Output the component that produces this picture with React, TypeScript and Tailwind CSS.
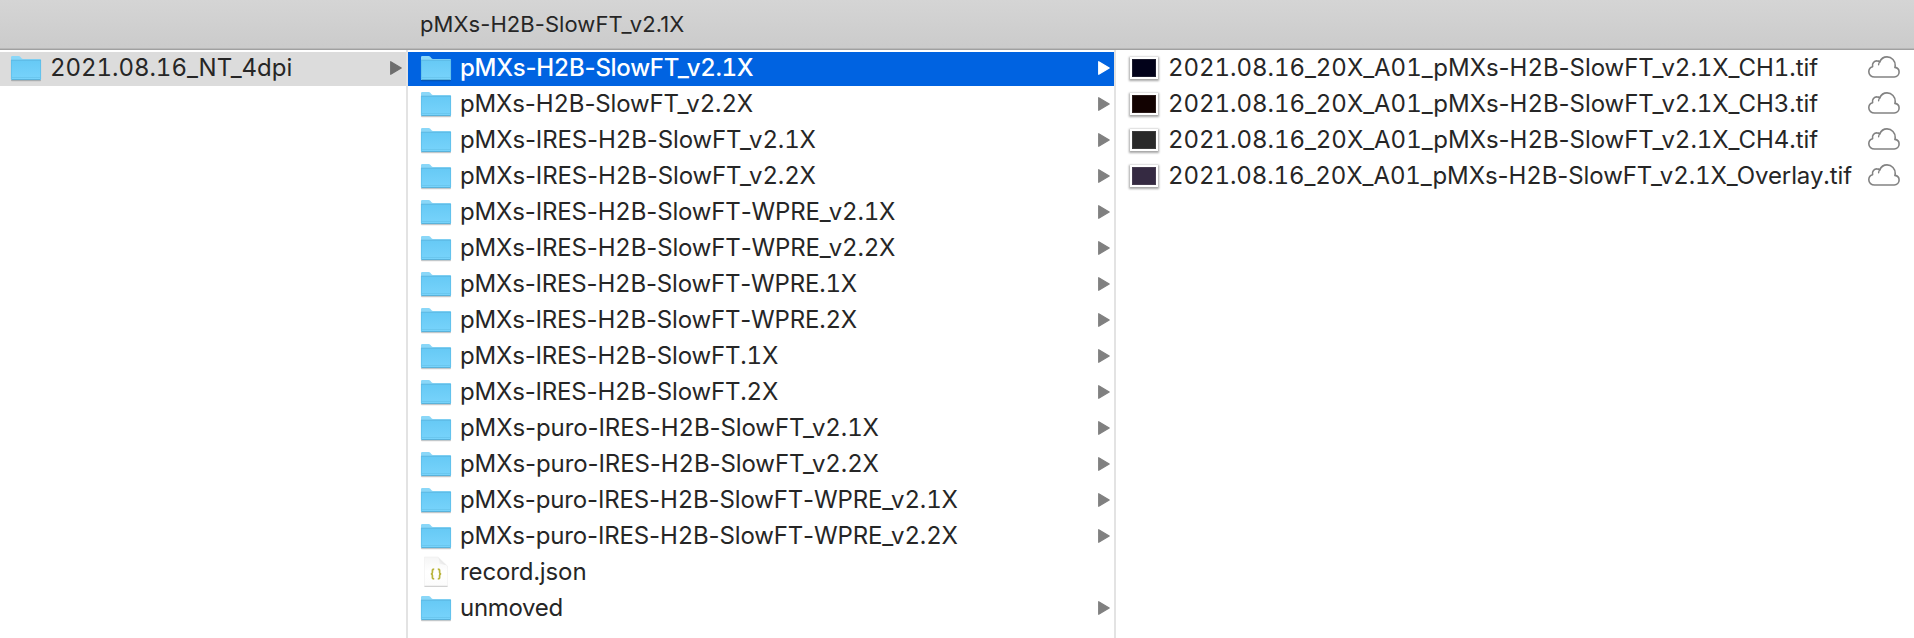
import React from "react";

type Kind = "folder" | "json";
type Entry = { name: string; kind: Kind; tracking: string };

const folders: Entry[] = [
  { name: "pMXs-H2B-SlowFT_v2.1X", kind: "folder", tracking: "tracking-[-0.28px]" },
  { name: "pMXs-H2B-SlowFT_v2.2X", kind: "folder", tracking: "tracking-[-0.15px]" },
  { name: "pMXs-IRES-H2B-SlowFT_v2.1X", kind: "folder", tracking: "tracking-[-0.12px]" },
  { name: "pMXs-IRES-H2B-SlowFT_v2.2X", kind: "folder", tracking: "tracking-[-0.12px]" },
  { name: "pMXs-IRES-H2B-SlowFT-WPRE_v2.1X", kind: "folder", tracking: "tracking-[-0.16px]" },
  { name: "pMXs-IRES-H2B-SlowFT-WPRE_v2.2X", kind: "folder", tracking: "tracking-[-0.16px]" },
  { name: "pMXs-IRES-H2B-SlowFT-WPRE.1X", kind: "folder", tracking: "tracking-[-0.18px]" },
  { name: "pMXs-IRES-H2B-SlowFT-WPRE.2X", kind: "folder", tracking: "tracking-[-0.18px]" },
  { name: "pMXs-IRES-H2B-SlowFT.1X", kind: "folder", tracking: "tracking-[-0.18px]" },
  { name: "pMXs-IRES-H2B-SlowFT.2X", kind: "folder", tracking: "tracking-[-0.18px]" },
  { name: "pMXs-puro-IRES-H2B-SlowFT_v2.1X", kind: "folder", tracking: "tracking-[-0.1px]" },
  { name: "pMXs-puro-IRES-H2B-SlowFT_v2.2X", kind: "folder", tracking: "tracking-[-0.1px]" },
  { name: "pMXs-puro-IRES-H2B-SlowFT-WPRE_v2.1X", kind: "folder", tracking: "tracking-[-0.15px]" },
  { name: "pMXs-puro-IRES-H2B-SlowFT-WPRE_v2.2X", kind: "folder", tracking: "tracking-[-0.15px]" },
  { name: "record.json", kind: "json", tracking: "tracking-[-0.1px]" },
  { name: "unmoved", kind: "folder", tracking: "tracking-[-0.3px]" },
];

const images = [
  { name: "2021.08.16_20X_A01_pMXs-H2B-SlowFT_v2.1X_CH1.tif", color: "bg-[#02021a]", edge: "border-[#1c1c2e]", tracking: "tracking-[-0.045px]" },
  { name: "2021.08.16_20X_A01_pMXs-H2B-SlowFT_v2.1X_CH3.tif", color: "bg-[#120201]", edge: "border-[#2b1c1b]", tracking: "tracking-[-0.045px]" },
  { name: "2021.08.16_20X_A01_pMXs-H2B-SlowFT_v2.1X_CH4.tif", color: "bg-[#292929]", edge: "border-[#3c3c3c]", tracking: "tracking-[-0.045px]" },
  { name: "2021.08.16_20X_A01_pMXs-H2B-SlowFT_v2.1X_Overlay.tif", color: "bg-[#352a42]", edge: "border-[#463c50]", tracking: "tracking-[-0.09px]" },
];

/* Digits are tabular, hyphens keep their proportional width. */
function FileName({ name, className }: { name: string; className: string }) {
  return (
    <span className={className}>
      {name.split(/(-)/).map((part, i) => (
        <span key={i} className={part === "-" ? "normal-nums" : "tabular-nums"}>{part}</span>
      ))}
    </span>
  );
}

function FolderIcon() {
  return (
    <svg width="32" height="28" viewBox="0 0 32 28" className="block shrink-0">
      <defs>
        <linearGradient id="folderFace" x1="0" y1="0" x2="0" y2="1">
          <stop offset="0" stopColor="#66c9f5" />
          <stop offset="1" stopColor="#78d3fb" />
        </linearGradient>
      </defs>
      <rect x="1" y="24.6" width="30" height="1.6" rx="0.8" fill="#000" opacity="0.2" />
      <path d="M1 2.2Q1 1 2.2 1H8.6Q9.6 1 10.3 1.8L11.5 3.2Q12.1 3.9 13 3.9H30Q31 3.9 31 5V24Q31 25 30 25H2Q1 25 1 24Z" fill="#8ad7f8" />
      <path d="M1 5H31V24Q31 25 30 25H2Q1 25 1 24Z" fill="url(#folderFace)" />
      <path d="M1 5.2H31" stroke="#59b4dd" strokeWidth="0.8" />
      <path d="M1.4 5V24M30.6 5V24" stroke="#5bbbe6" strokeWidth="0.7" />
      <path d="M2 22.5H30" stroke="#63bfe8" strokeWidth="0.6" />
      <path d="M1.5 24.6H30.5" stroke="#4ea5cd" strokeWidth="0.8" />
    </svg>
  );
}

function JsonIcon() {
  return (
    <svg width="32" height="34" viewBox="0 0 32 34" className="block shrink-0">
      <defs>
        <linearGradient id="pageFace" x1="0" y1="0" x2="0" y2="1">
          <stop offset="0" stopColor="#f5f5f5" />
          <stop offset="0.5" stopColor="#ffffff" />
          <stop offset="1" stopColor="#fcfcfc" />
        </linearGradient>
        <linearGradient id="pageFold" x1="0" y1="1" x2="1" y2="0">
          <stop offset="0" stopColor="#ffffff" />
          <stop offset="1" stopColor="#cfcfcf" />
        </linearGradient>
      </defs>
      <path d="M4.5 1H18L27.5 10V30.5H4.5Z" fill="url(#pageFace)" stroke="#efefef" strokeWidth="0.6" />
      <path d="M17.5 1Q19.6 2.4 19.4 7.9Q25 8 27.5 10.2Z" fill="url(#pageFold)" />
      <path d="M4.5 30.3H27.5" stroke="#c8c8c8" strokeWidth="1" />
      <g fill="none" stroke="#b9b43c" strokeWidth="1.7">
        <path d="M14.2 13.2Q12.4 13.2 12.4 14.6V16.4Q12.4 17.9 10.8 17.9Q12.4 17.9 12.4 19.4V21.4Q12.4 22.8 14.2 22.8" />
        <path d="M17.8 13.2Q19.6 13.2 19.6 14.6V16.4Q19.6 17.9 21.2 17.9Q19.6 17.9 19.6 19.4V21.4Q19.6 22.8 17.8 22.8" />
      </g>
    </svg>
  );
}

function Arrow({ className }: { className: string }) {
  return (
    <svg width="12" height="14" viewBox="0 0 12 14" className={"mb-[2px] block shrink-0 " + className}>
      <path d="M0.7 0.7L11.2 7L0.7 13.3Z" fill="currentColor" stroke="currentColor" strokeWidth="1.2" strokeLinejoin="round" />
    </svg>
  );
}

function CloudIcon() {
  return (
    <svg width="32" height="22" viewBox="0 0 32 22" className="mb-1 block shrink-0">
      <path
        d="M6.6 21C3.4 21 0.8 18.8 0.8 15.8C0.8 13.2 2.4 11.3 4.6 10.7C3.8 7.5 6.2 4.8 9 4.9C10.2 4.9 11.1 5.3 11.8 5.9C13 3 15.8 0.9 19 0.9C23.8 0.9 27.4 4.8 27.2 9.5C27.2 10.3 27.1 10.8 26.9 11.4C29.3 11.7 31.1 13.6 31.1 16.1C31.1 18.8 29 21 26.3 21Z"
        fill="none" stroke="#828282" strokeWidth="1.6" strokeLinejoin="round"
      />
      <path d="M11.8 5.9Q10.7 7.1 10.6 8.7" fill="none" stroke="#828282" strokeWidth="1.4" strokeLinecap="round" />
    </svg>
  );
}

export default function App() {
  return (
    <div className="flex h-[638px] w-[1914px] flex-col overflow-hidden bg-white font-['Inter','Liberation_Sans',sans-serif] text-[24px] leading-[34px] whitespace-nowrap text-[#262626]">
      <header className="flex h-[50px] shrink-0 items-center border-b border-[#a0a0a0] bg-linear-to-b from-[#d5d5d5] to-[#cbcbcb] pb-px pl-[420px] text-[22px] shadow-[inset_0_-1px_0_#b8b8b8]">
        <h1 className="tracking-[0.06px]">pMXs-H2B-SlowFT_v2.1X</h1>
      </header>
      <main className="flex min-h-0 flex-1">
        <section className="w-[408px] shrink-0 border-r-2 border-[#e3e3e3] pt-[2px]">
          <div className="flex h-[34px] items-center bg-[#dcdcdc] pr-1 pl-[10px]">
            <FolderIcon />
            <FileName name="2021.08.16_NT_4dpi" className="mb-[2px] ml-2 flex-1 tracking-[-0.05px]" />
            <Arrow className="text-[#6e6e6e]" />
          </div>
        </section>
        <section className="flex w-[708px] shrink-0 flex-col gap-[2px] border-r-2 border-[#e3e3e3] pt-[2px]">
          {folders.map((f, i) => (
            <div key={f.name} className={"flex h-[34px] shrink-0 items-center pr-1 pl-3 " + (i === 0 ? "bg-[#0063e1] font-medium text-white" : "")}>
              {f.kind === "folder" ? <FolderIcon /> : <JsonIcon />}
              <FileName name={f.name} className={"mb-[2px] ml-2 flex-1 " + f.tracking} />
              {f.kind === "folder" && <Arrow className={i === 0 ? "text-white" : "text-[#808080]"} />}
            </div>
          ))}
        </section>
        <section className="flex flex-1 flex-col gap-[2px] pt-[2px]">
          {images.map((f) => (
            <div key={f.name} className="flex h-[34px] items-center pr-[14px] pl-[14px]">
              <div className="mb-[2px] h-[22px] w-[28px] shrink-0 bg-white p-[2px] shadow-[0_1px_2px_1px_rgba(0,0,0,0.35)]">
                <div className={"h-[18px] w-[24px] border " + f.color + " " + f.edge} />
              </div>
              <FileName name={f.name} className={"mb-[2px] ml-[10px] flex-1 " + f.tracking} />
              <CloudIcon />
            </div>
          ))}
        </section>
      </main>
    </div>
  );
}
